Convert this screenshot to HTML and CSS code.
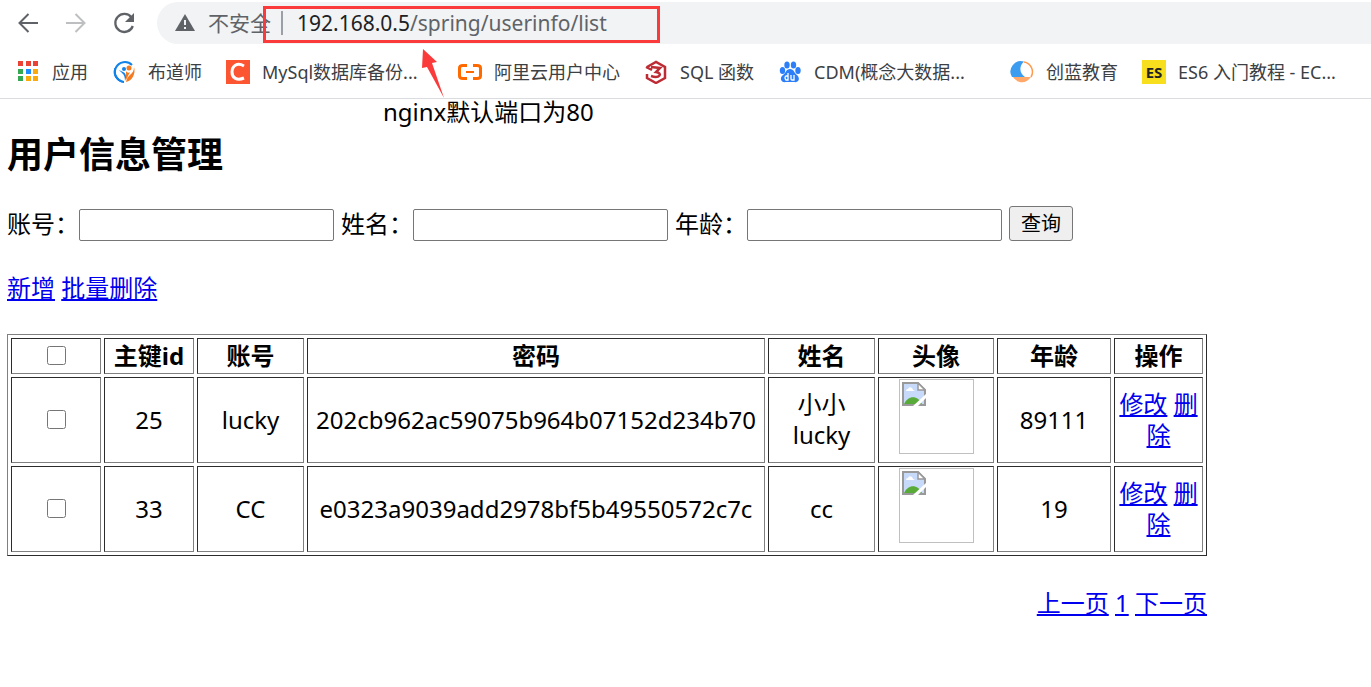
FILE: index.html
```html
<!DOCTYPE html>
<html lang="zh-CN">
<head>
    <meta charset="UTF-8">
    <meta name="viewport" content="width=device-width, initial-scale=1.0">
    <title>用户信息管理</title>
    <link rel="stylesheet" href="styles.css">
</head>
<body>
    <header class="browser">
        <div class="toolbar">
            <button class="nav-btn" type="button" aria-label="后退">
                <svg width="24" height="24" viewBox="0 0 24 24" fill="none" stroke="#5f6368" stroke-width="2"><path d="M22 12H4M12.500 3 3.500 12l9 9"/></svg>
            </button>
            <button class="nav-btn" type="button" aria-label="前进">
                <svg width="24" height="24" viewBox="0 0 24 24" fill="none" stroke="#bdbfc1" stroke-width="2"><path d="M2 12h18M11.500 3l9 9-9 9"/></svg>
            </button>
            <button class="nav-btn" type="button" aria-label="刷新">
                <svg width="24" height="24" viewBox="0 0 24 24"><path d="M19.500 6.500A9 9 0 1 0 20.800 15" fill="none" stroke="#5f6368" stroke-width="2.300"/><path d="M22 2v9h-9z" fill="#5f6368"/></svg>
            </button>
            <div class="address">
                <svg width="20" height="18" viewBox="0 0 20 18"><path d="M10 0l10 17H0z" fill="#5f6368"/><path d="M9 6h2v5H9zM9 13h2v2H9z" fill="#f1f3f4"/></svg>
                <span class="insecure">不安全</span>
                <span class="divider"></span>
                <span class="url"><span class="host">192.168.0.5</span>/spring/userinfo/list</span>
            </div>
        </div>
        <nav class="bookmarks">
            <a class="bookmark" href="#">
                <svg width="24" height="24" viewBox="0 0 24 24">
                    <path d="M2 1h5v5H2zM10 1h5v5h-5zM17 1h5v5h-5z" fill="#ea4335"/>
                    <path d="M2 9h5v5H2zM2 16h5v5H2z" fill="#34a853"/>
                    <path d="M10 9h5v5h-5z" fill="#1a8cff"/>
                    <path d="M17 9h5v5h-5zM10 16h5v5h-5zM17 16h5v5h-5z" fill="#fbab09"/>
                </svg>
                <span>应用</span>
            </a>
            <a class="bookmark" href="#">
                <svg width="24" height="24" viewBox="0 0 24 24">
                    <path d="M20 5A10 10 0 1 0 12 22" fill="none" stroke="#1283e8" stroke-width="2"/>
                    <path d="M3 8c-1 6 2 11 9 14C5 22 0 15 3 8z" fill="#1283e8" stroke="#1283e8"/>
                    <path d="M7 10c2 3 6 3 6 11 2-4 1-8-2-9z" fill="#1283e8"/>
                    <circle cx="12" cy="9" r="2" fill="#1283e8"/>
                    <circle cx="17" cy="8" r="2.500" fill="#f47b20"/>
                    <path d="M22 7c0 8-6 6-8 15 6-1 10-8 8-15z" fill="#f47b20"/>
                    <path d="M14 11c1 2 3 2 4 1l-4 8z" fill="#f47b20"/>
                </svg>
                <span>布道师</span>
            </a>
            <a class="bookmark" href="#">
                <svg width="24" height="24" viewBox="0 0 24 24"><path d="M0 0h24v24H0z" fill="#fc5531"/><path d="M18 6C11 2 6 6 6 12s5 9 12 6" fill="none" stroke="#fff" stroke-width="3"/></svg>
                <span class="clipped">MySql数据库备份...</span>
            </a>
            <a class="bookmark" href="#">
                <svg width="24" height="24" viewBox="0 0 24 24" fill="none" stroke="#ff6a00" stroke-width="3"><path d="M9 5.500H5Q1.500 5.500 1.500 8v8q0 2.500 3.500 2.500h4M15 5.500h4q3.500 0 3.500 2.500v8q0 2.500-3.500 2.500h-4"/><path d="M8 12h8" stroke-width="2"/></svg>
                <span>阿里云用户中心</span>
            </a>
            <a class="bookmark" href="#">
                <svg width="24" height="24" viewBox="0 0 24 24" fill="none" stroke="#bd2c34" stroke-width="2.500"><path d="M3 7l9-5 9 5v11l-9 5-9-5v-4"/><path d="M2 7l6 3M7 7l9 1-4 4c7 1 4 7-5 4"/></svg>
                <span>SQL 函数</span>
            </a>
            <a class="bookmark" href="#">
                <svg width="24" height="24" viewBox="0 0 24 24">
                    <g fill="#2d7ff9">
                        <ellipse cx="4.500" cy="10.500" rx="2.700" ry="3.500"/>
                        <ellipse cx="9" cy="5" rx="2.700" ry="3.600"/>
                        <ellipse cx="15.500" cy="5" rx="2.700" ry="3.600"/>
                        <ellipse cx="20" cy="10.500" rx="2.700" ry="3.500"/>
                        <path d="M12 9c4 0 4 4 7 6 4 4 1 8-3 7H8c-5 1-7-4-3-7 3-2 3-6 7-6z"/>
                    </g>
                    <path d="M10 13v7H8q-2-2.500 0-4h2M13 15v4q0 1 1 1h2v-5" fill="none" stroke="#fff" stroke-width="1.300"/>
                </svg>
                <span class="clipped">CDM(概念大数据...</span>
            </a>
            <a class="bookmark" href="#">
                <svg width="24" height="24" viewBox="0 0 24 24">
                    <path d="M14 1.500A10.500 10.500 0 0 0 2 17h13C9 13 9 6 14 1.500z" fill="#3c9df0"/>
                    <path d="M14 2a10 10 0 0 1 7 15" fill="none" stroke="#ff9a50" stroke-width="1.500"/>
                    <path d="M3 17h18C16 24 8 24 3 17z" fill="#ffa869"/>
                </svg>
                <span>创蓝教育</span>
            </a>
            <a class="bookmark" href="#">
                <span class="es-logo">ES</span>
                <span class="clipped">ES6 入门教程 - EC...</span>
            </a>
        </nav>

        <!-- note pointing at the address -->
        <div class="note-frame"></div>
        <svg class="note-arrow" width="24" height="50" viewBox="0 0 24 50"><path d="M3 0l14 13-5 1 12 35L7 18l-5 1z" fill="#fb3b3b"/></svg>
        <div class="note-text">nginx默认端口为80</div>
    </header>

    <main>
        <h2>用户信息管理</h2>
        <form class="search">
            <label for="account">账号：</label>
            <input type="text" id="account">
            <label for="name">姓名：</label>
            <input type="text" id="name">
            <label for="age">年龄：</label>
            <input type="text" id="age">
            <button type="submit">查询</button>
        </form>
        <div class="actions"><a href="#">新增</a> <a href="#">批量删除</a></div>
        <table class="users">
            <colgroup>
                <col class="col-check"><col class="col-id"><col class="col-account"><col class="col-password">
                <col class="col-name"><col class="col-avatar"><col class="col-age"><col class="col-ops">
            </colgroup>
            <thead>
                <tr>
                    <th><input type="checkbox" aria-label="全选"></th>
                    <th>主键id</th>
                    <th>账号</th>
                    <th>密码</th>
                    <th>姓名</th>
                    <th>头像</th>
                    <th>年龄</th>
                    <th>操作</th>
                </tr>
            </thead>
            <tbody>
                <tr>
                    <td><input type="checkbox" aria-label="选择 25"></td>
                    <td>25</td>
                    <td>lucky</td>
                    <td>202cb962ac59075b964b07152d234b70</td>
                    <td>小小lucky</td>
                    <td class="avatar-cell">
                        <span class="avatar">
                            <svg width="24" height="24" viewBox="0 0 24 24">
                                <path d="M1 1h15l7 7v15H1z" fill="#c8dafa" stroke="#999" stroke-width="2"/>
                                <path d="M16 1v7h7z" fill="#fff" stroke="#999" stroke-width="1.500"/>
                                <path d="M4 9q0-2 2-2 1-3 4-1 1 3 3 3z" fill="#fff"/>
                                <path d="M2 22c4-9 14-9 18 0z" fill="#58ab38"/>
                                <path d="M11 24 24 12v4l-8 8z" fill="#fff"/>
                            </svg>
                        </span>
                    </td>
                    <td>89111</td>
                    <td><a href="#">修改</a> <a href="#">删除</a></td>
                </tr>
                <tr>
                    <td><input type="checkbox" aria-label="选择 33"></td>
                    <td>33</td>
                    <td>CC</td>
                    <td>e0323a9039add2978bf5b49550572c7c</td>
                    <td>cc</td>
                    <td class="avatar-cell">
                        <span class="avatar">
                            <svg width="24" height="24" viewBox="0 0 24 24">
                                <path d="M1 1h15l7 7v15H1z" fill="#c8dafa" stroke="#999" stroke-width="2"/>
                                <path d="M16 1v7h7z" fill="#fff" stroke="#999" stroke-width="1.500"/>
                                <path d="M4 9q0-2 2-2 1-3 4-1 1 3 3 3z" fill="#fff"/>
                                <path d="M2 22c4-9 14-9 18 0z" fill="#58ab38"/>
                                <path d="M11 24 24 12v4l-8 8z" fill="#fff"/>
                            </svg>
                        </span>
                    </td>
                    <td>19</td>
                    <td><a href="#">修改</a> <a href="#">删除</a></td>
                </tr>
            </tbody>
        </table>
        <div class="pager"><a href="#">上一页</a> <a href="#">1</a> <a href="#">下一页</a></div>
    </main>
</body>
</html>
```
FILE: styles.css
```css
body {
    margin: 0;
    background: #fff;
    color: #000;
    font-family: "Noto Sans", "Noto Sans CJK SC", sans-serif;
    font-size: 24px;
    line-height: 31px;
}

.browser {
    position: relative;
    border-bottom: 1px solid #dadce0;
}

.toolbar {
    display: flex;
    align-items: center;
    padding: 2px 0 2px 16px;
}

.nav-btn {
    display: flex;
    margin-right: 24px;
    padding: 0;
    border: none;
    background: none;
}

.nav-btn:nth-child(3) {
    margin-right: 21px;
}

.nav-btn svg {
    display: block;
}

.address {
    flex: 1;
    display: flex;
    align-items: center;
    height: 42px;
    padding-left: 18px;
    border-radius: 21px 0 0 21px;
    background: #f1f3f4;
    color: #5f6368;
    font-size: 21px;
    white-space: nowrap;
}

.insecure {
    margin-left: 13px;
}

.divider {
    width: 2px;
    height: 24px;
    margin: 0 14px 0 10px;
    background: #9aa0a6;
}

.host {
    color: #202124;
}

.bookmarks {
    display: flex;
    align-items: center;
    gap: 24px;
    height: 52px;
    padding-left: 16px;
    overflow: hidden;
}

.bookmark {
    flex: none;
    display: flex;
    align-items: center;
    gap: 12px;
    color: #3c4043;
    font-size: 18px;
    text-decoration: none;
    white-space: nowrap;
}

.clipped {
    width: 172px;
}

.es-logo {
    width: 24px;
    height: 24px;
    background: #f7df1e;
    color: #222;
    font-size: 15px;
    font-weight: bold;
    line-height: 24px;
    text-align: center;
}

.note-frame {
    position: absolute;
    left: 263px;
    top: 6px;
    width: 391px;
    height: 31px;
    border: 3px solid #fb3b3b;
}

.note-arrow {
    position: absolute;
    left: 420px;
    top: 49px;
}

.note-text {
    position: absolute;
    left: 383px;
    top: 96px;
}

main {
    padding: 32px 7px;
}

h2 {
    margin: 0 0 27px;
    font-size: 36px;
    line-height: 48px;
}

a {
    color: #0000ee;
    text-underline-offset: 2px;
}

.search {
    display: flex;
    align-items: flex-end;
    margin-bottom: 31px;
}

.search label {
    line-height: 35px;
}

.search input {
    box-sizing: border-box;
    width: 255px;
    height: 32px;
    min-width: 0;
    margin-right: 7px;
    border: 1px solid #767676;
    border-radius: 2px;
    font: inherit;
    font-size: 20px;
}

.search button {
    width: 64px;
    height: 35px;
    padding: 0;
    border: 1px solid #767676;
    border-radius: 3px;
    background: #efefef;
    color: #000;
    font: inherit;
    font-size: 20px;
}

.actions {
    margin-bottom: 31px;
}

.users {
    width: 100%;
    max-width: 1200px;
    table-layout: fixed;
    border: 1px solid;
    border-color: #808080 #2c2c2c #2c2c2c #808080;
    border-spacing: 3px;
    text-align: center;
}

.users th,
.users td {
    padding: 0 1px 2px;
    border: 1px solid;
    border-color: #2c2c2c #808080 #808080 #2c2c2c;
}

.users thead tr {
    height: 36px;
}

.users tbody tr {
    height: 86px;
}

.users input {
    display: block;
    width: 19px;
    height: 19px;
    margin: 0 auto;
}

.col-check,
.col-id {
    width: 90px;
}

.col-account,
.col-name {
    width: 107px;
}

.col-password {
    width: 458px;
}

.col-avatar {
    width: 116px;
}

.col-age {
    width: 114px;
}

.col-ops {
    width: 89px;
}

.users .avatar-cell {
    padding-top: 1px;
    vertical-align: top;
}

.avatar {
    display: block;
    box-sizing: border-box;
    width: 75px;
    height: 75px;
    margin: 0 auto;
    padding: 2px;
    border: 1px solid #c0c0c0;
    line-height: 0;
    text-align: left;
}

.pager {
    max-width: 1200px;
    margin-top: 31px;
    text-align: right;
}
```
